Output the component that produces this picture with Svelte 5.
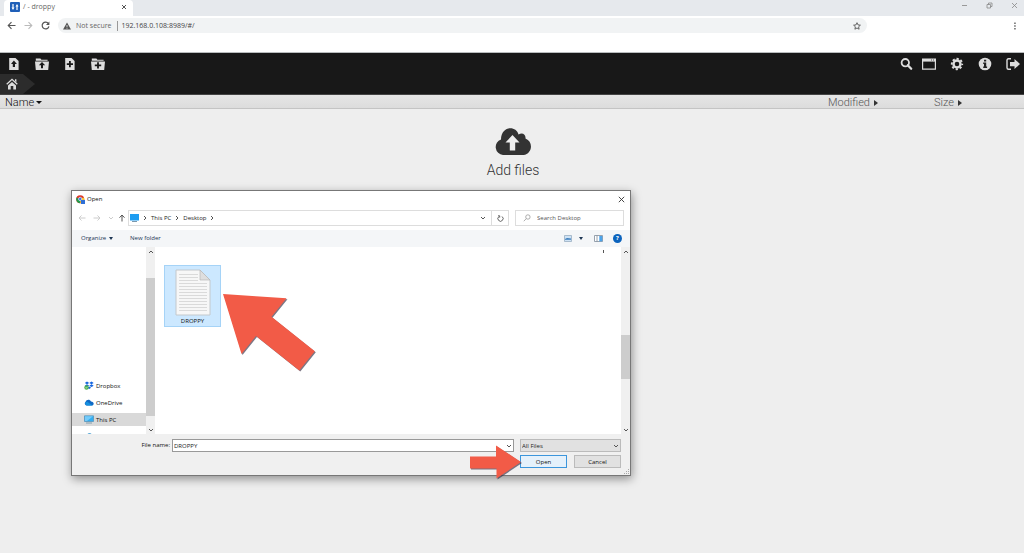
<script>
  let address = $state('192.168.0.108:8989/#/');
  let fileName = $state('DROPPY');
  const crumbs = ['This PC', 'Desktop'];
  const places = ['Dropbox', 'OneDrive', 'This PC', 'Network'];
</script>

{#snippet chevron(rotate)}
  <svg class="chev" viewBox="0 0 6 6" style:rotate="{rotate}deg" aria-hidden="true">
    <path d="M1 2l2 2 2-2" fill="none" stroke="currentColor" stroke-width="1" />
  </svg>
{/snippet}

<div class="window">
  <header class="tabs">
    <div class="tab">
      <svg width="10" height="10" viewBox="0 0 10 10" aria-hidden="true">
        <rect width="10" height="10" rx="1" fill="#1f5fb8" />
        <path d="M3 2v4M7 4v4" stroke="#fff" stroke-width="1.2" />
        <path d="M1.500 5.600h3L3 8zM5.500 4.400h3L7 2z" fill="#fff" />
      </svg>
      <span class="tab-title">/ - droppy</span>
      <button aria-label="Close tab">
        <svg width="6" height="6" viewBox="0 0 6 6"><path d="M1 1l4 4M5 1L1 5" stroke="#555" stroke-width="1" /></svg>
      </button>
    </div>
    <div class="controls">
      <button aria-label="Minimize"><svg width="7" height="7" viewBox="0 0 7 7"><path d="M1 3.500h5" stroke="#999" /></svg></button>
      <button aria-label="Restore"><svg width="7" height="7" viewBox="0 0 7 7"><path d="M1 2.500h3.500V6H1zM2.500 2.500V1H6v3.500H4.500" fill="none" stroke="#888" stroke-width=".8" /></svg></button>
      <button aria-label="Close"><svg width="7" height="7" viewBox="0 0 7 7"><path d="M1 1l5 5M6 1L1 6" stroke="#888" stroke-width=".8" /></svg></button>
    </div>
  </header>

  <div class="browser-bar">
    <button aria-label="Back"><svg width="9" height="9" viewBox="0 0 9 9"><path d="M8.500 4.500H1.300M4.500 1.200L1.200 4.500l3.300 3.300" fill="none" stroke="#555" stroke-width="1.100" /></svg></button>
    <button aria-label="Forward"><svg width="9" height="9" viewBox="0 0 9 9"><path d="M.5 4.500h7.200M4.500 1.200l3.300 3.300-3.300 3.300" fill="none" stroke="#bbb" stroke-width="1.100" /></svg></button>
    <button aria-label="Reload"><svg width="9" height="9" viewBox="0 0 9 9"><path d="M7.400 2.600A3.400 3.400 0 1 0 7.900 5.300" fill="none" stroke="#555" stroke-width="1.200" /><path d="M8.400.6v3.400H5z" fill="#555" /></svg></button>
    <div class="omnibox">
      <svg width="8" height="8" viewBox="0 0 8 8" aria-hidden="true"><path d="M4 .4L8 7.600H0z" fill="#555" /><path d="M4 3v2.200M4 5.800v.9" stroke="#f1f3f4" stroke-width=".8" /></svg>
      <span class="secure">Not secure</span>
      <input aria-label="Address" bind:value={address} />
      <button aria-label="Bookmark"><svg width="8" height="8" viewBox="0 0 8 8"><path d="M4 .7l1 2.200 2.400.3-1.800 1.600.5 2.400L4 6 1.900 7.200l.5-2.400L.6 3.200 3 2.900z" fill="none" stroke="#555" stroke-width=".9" /></svg></button>
    </div>
    <button class="menu" aria-label="Menu"><svg width="4" height="8" viewBox="0 0 4 8"><path d="M1.200.5h1.500V2H1.200zM1.200 3.300h1.500v1.500H1.200zM1.200 6.100h1.500v1.500H1.200z" fill="#666" /></svg></button>
  </div>

  <nav class="app-bar">
    <div class="tools">
      <button aria-label="Upload file"><svg viewBox="0 0 14 14"><path d="M2.200 1h6.300L11.600 4v9H2.200z" fill="#ddd" /><path d="M6.900 3.600l3 3.400H8v3H5.800V7H4z" fill="#181818" /></svg></button>
      <button aria-label="Upload folder"><svg viewBox="0 0 14 14"><path d="M.8 1.600h4.600l1 1.200h6.200v1H.8zM0 4.500h14L13.200 13H.8z" fill="#ddd" /><path d="M7 5l3.200 3.300H8v3H6v-3H3.800z" fill="#181818" /></svg></button>
      <button aria-label="New file"><svg viewBox="0 0 14 14"><path d="M2.200 1h6.300L11.600 4v9H2.200z" fill="#ddd" /><path d="M6 4h1.800v2.200H10V8H7.800v2.200H6V8H3.800V6.200H6z" fill="#181818" /></svg></button>
      <button aria-label="New folder"><svg viewBox="0 0 14 14"><path d="M.8 1.600h4.600l1 1.200h6.200v1H.8zM0 4.500h14L13.200 13H.8z" fill="#ddd" /><path d="M6.100 5.200h1.800v2.300h2.300v1.800H7.900v2.300H6.100V9.300H3.800V7.500h2.300z" fill="#181818" /></svg></button>
    </div>
    <div class="tools right">
      <button class="search" aria-label="Search"><svg viewBox="0 0 14 14"><circle cx="6.300" cy="5.700" r="3.700" fill="none" stroke="#ddd" stroke-width="1.800" /><path d="M8.800 8.300l3.400 3.500" stroke="#ddd" stroke-width="2.300" stroke-linecap="round" /></svg></button>
      <button aria-label="Split view"><svg viewBox="0 0 14 14"><path d="M.6 2.200h12.800v9.900H.6z" fill="none" stroke="#ddd" stroke-width="1.200" /><path d="M.6 2h12.800v2.600H.6z" fill="#ddd" /><path d="M9 3h1M11 3h1" stroke="#333" stroke-width=".8" /></svg></button>
      <button aria-label="Settings"><svg viewBox="0 0 14 14"><circle cx="7" cy="7" r="3.500" fill="none" stroke="#ddd" stroke-width="2.400" /><circle cx="7" cy="7" r="5.200" fill="none" stroke="#ddd" stroke-width="1.900" stroke-dasharray="2.200 1.884" stroke-dashoffset="1.100" /></svg></button>
      <button aria-label="About"><svg viewBox="0 0 14 14"><circle cx="7" cy="7" r="6.300" fill="#ddd" /><path d="M6 2.700h2.200v1.800H6zM5.200 5.600h3v4h.9V11H5.200V9.600H6V7h-.8z" fill="#222" /></svg></button>
      <button aria-label="Log out"><svg viewBox="0 0 14 14"><path d="M5 1.800H2.500Q1 1.800 1 3.300v7.400q0 1.500 1.500 1.500H5" fill="none" stroke="#ddd" stroke-width="1.400" /><path d="M4 4.900h4.500V2L14 7l-5.500 5V9.200H4z" fill="#ddd" /></svg></button>
    </div>
  </nav>
  <div class="path-bar">
    <a href="#/" aria-label="Home">
      <svg width="12" height="12" viewBox="0 0 12 12"><path d="M.7 6.300L6 1.300l5.300 5" fill="none" stroke="#ddd" stroke-width="1.300" /><path d="M9 1.300h1.400v3L9 3.300zM2 7.600l4-3.700 4 3.700V11.500H7.300V8H4.700v3.500H2z" fill="#ddd" /></svg>
    </a>
  </div>

  <div class="columns">
    <button class="name">Name <i class="down"></i></button>
    <button>Modified <i></i></button>
    <button>Size <i></i></button>
  </div>

  <main>
    <button class="add">
      <svg width="38" height="28" viewBox="0 0 38 28" aria-hidden="true"><path d="M9 27A8 8 0 0 1 7 11.500C7-2 22-3 24.500 6.500C28 4 32 6 31.500 10.500C40 14 38 26 29.500 27z" fill="#333" /><path d="M18.500 7l7 7.500h-4.300v8h-5.400v-8h-4.300z" fill="#eee" /></svg>
      Add files
    </button>
  </main>

  <div class="dialog" role="dialog" aria-label="Open">
    <div class="title">
      <svg width="9" height="9" viewBox="0 0 9 9" aria-hidden="true"><circle cx="4.200" cy="4.200" r="4" fill="#dd3a2b" /><path d="M.6 2.500A4 4 0 0 0 4 8.200L5 5z" fill="#219a4b" /><path d="M8 2.700A4 4 0 0 1 4 8.200L5 3z" fill="#fbc52c" /><circle cx="4.200" cy="4" r="1.700" fill="#3b78e7" stroke="#fff" stroke-width=".6" /><path d="M5 5h4v4H5z" fill="#2f6fd6" /></svg>
      <span>Open</span>
      <button aria-label="Close dialog"><svg width="7" height="7" viewBox="0 0 7 7"><path d="M.8.8l5.400 5.400M6.200.8L.8 6.200" stroke="#333" stroke-width=".9" /></svg></button>
    </div>

    <div class="locate">
      <div class="moves">
        <button aria-label="Back"><svg width="8" height="8" viewBox="0 0 8 8"><path d="M7.500 4H1M3.500 1.500L1 4l2.500 2.500" fill="none" stroke="#ccc" /></svg></button>
        <button aria-label="Forward"><svg width="8" height="8" viewBox="0 0 8 8"><path d="M.5 4H7M4.500 1.500L7 4 4.500 6.500" fill="none" stroke="#ccc" /></svg></button>
        <button class="faint" aria-label="Recent">{@render chevron(0)}</button>
        <button aria-label="Up"><svg width="8" height="8" viewBox="0 0 8 8"><path d="M4 7.500V1M1.500 3.700L4 1l2.500 2.700" fill="none" stroke="#555" /></svg></button>
      </div>
      <div class="crumbs">
        <svg width="9" height="8" viewBox="0 0 9 8" aria-hidden="true"><path d="M0 0h9v6.500H0z" fill="#1e9df1" /><path d="M2 7.500h5" stroke="#7a98ad" /></svg>
        {@render chevron(-90)}
        {#each crumbs as crumb}
          <button>{crumb}</button>{@render chevron(-90)}
        {/each}
        <button class="drop" aria-label="Previous locations">{@render chevron(0)}</button>
        <button class="refresh" aria-label="Refresh"><svg width="7" height="7" viewBox="0 0 7 7"><path d="M5 1.500A2.600 2.600 0 1 1 2 1.500M1 .8h1.700v1.800" fill="none" stroke="#555" stroke-width=".9" /></svg></button>
      </div>
      <div class="find">
        <svg width="8" height="8" viewBox="0 0 8 8" aria-hidden="true"><circle cx="4.900" cy="3" r="2.200" fill="none" stroke="#999" stroke-width=".8" /><path d="M3.300 4.600L.8 7.200" stroke="#999" stroke-width=".8" /></svg>
        <input aria-label="Search Desktop" placeholder="Search Desktop" />
      </div>
    </div>

    <div class="commands">
      <button>Organize <i class="down"></i></button>
      <button>New folder</button>
      <div class="views">
        <button aria-label="Change view"><svg width="9" height="7" viewBox="0 0 9 7"><path d="M.5.5h7v6h-7z" fill="#cfe3f5" stroke="#8fa6bb" stroke-width=".7" /><path d="M1 4l2-1 4 .6v1.200H1z" fill="#3a7dbd" /></svg></button>
        <button aria-label="More views"><i class="down"></i></button>
        <button class="pane" aria-label="Preview pane"><svg width="9" height="7" viewBox="0 0 9 7"><path d="M.5.5h8v6h-8zM3 .5v6" fill="#fff" stroke="#7d8b99" stroke-width=".8" /><path d="M5.300 1h3v5.300h-3z" fill="#4ba3ea" /></svg></button>
        <button class="help" aria-label="Help">?</button>
      </div>
    </div>

    <div class="browse">
      <ul class="places">
        {#each places as place, i}
          <li class:active={place === 'This PC'}>
            <svg width="10" height="9" viewBox="0 0 10 9" aria-hidden="true">
              {#if i === 0}
                <path d="M3 .5l2.200 1.400L3 3.300.8 1.900zM7.500.5l2.200 1.400-2.200 1.400-2.200-1.400zM3 3.300l2.200 1.400L3 6.100.8 4.700zM7.500 3.300l2.200 1.400-2.200 1.400-2.200-1.400zM5.200 5.400l2 1.300-2 1.300-2-1.300z" fill="#1565e0" /><circle cx="2.500" cy="6.500" r="2.200" fill="#4caf50" /><path d="M1.400 6.500l.8.8 1.300-1.500" fill="none" stroke="#fff" stroke-width=".6" />
              {:else if i === 1}
                <path d="M2.500 7.500A2 2 0 0 1 1.500 4C2.500 1 6 1 7 3.500c3 0 3.500 3.500 1.300 4z" fill="#0f68c4" /><path d="M1 5l2-1.500L8.500 7.500h-6z" fill="#1490df" />
              {:else if i === 2}
                <path d="M.5.800h9v5.700h-9z" fill="#35aef0" stroke="#4a86ae" stroke-width=".6" /><path d="M1 1.200h8L3 6H1z" fill="#74cbfa" /><path d="M2 8h6" stroke="#7c97a8" stroke-width=".9" />
              {:else}
                <path d="M3 3a2.600 2.600 0 0 1 5 0v4H3z" fill="#5ba9d6" />
              {/if}
            </svg>
            <a href="#/">{place}</a>
          </li>
        {/each}
      </ul>
      <div class="scroll left"><span>{@render chevron(180)}</span><b></b><span>{@render chevron(0)}</span></div>
      <div class="files">
        <button class="file">
          <svg width="36" height="47" viewBox="0 0 36 47" aria-hidden="true">
            <path d="M1 1h24l10 10v35H1z" fill="#f7f7f7" stroke="#c3c8cc" />
            {#each [5, 8, 11, 14, 17, 20, 23, 26, 29, 32, 35, 38, 41] as y}
              <path d={`M4 ${y}.5h${y < 12 ? 19 : 28}`} stroke="#dadada" />
            {/each}
            <path d="M25 1v10h10z" fill="#dedede" stroke="#b7b7b7" stroke-width=".7" />
          </svg>
          DROPPY
        </button>
        <i class="mark"></i>
      </div>
      <div class="scroll main-scroll"><span>{@render chevron(180)}</span><b></b><span>{@render chevron(0)}</span></div>
    </div>

    <form class="choose" onsubmit={(e) => e.preventDefault()}>
      <label for="file-name">File name:</label>
      <div class="combo">
        <input id="file-name" bind:value={fileName} />
        <button type="button" aria-label="Recent names">{@render chevron(0)}</button>
      </div>
      <div class="combo kind">
        <select aria-label="File type"><option>All Files</option></select>
        {@render chevron(0)}
      </div>
      <div class="actions">
        <button class="primary">Open</button>
        <button type="button">Cancel</button>
      </div>
    </form>
    <svg class="grip" viewBox="0 0 6 6" aria-hidden="true"><path d="M4 0h1v1H4zM2 2h1v1H2zM4 2h1v1H4zM0 4h1v1H0zM2 4h1v1H2zM4 4h1v1H4z" fill="#aaa" /></svg>

    <svg class="pointer big" viewBox="0 0 94 80" aria-hidden="true">
      <path d="M1 1l63.500 4.300-15 18.500 43.300 34.500-15.500 19.200L34 43 19.500 61z" />
    </svg>
    <svg class="pointer small" viewBox="0 0 54 37" aria-hidden="true">
      <path d="M1 12.500h26V1.500L52 18 27.500 34.500V24.500H1z" />
    </svg>
  </div>
</div>

<style>
  :global(body) { background: #eee; }
  * { box-sizing: border-box; }
  .window { position: relative; min-height: 100vh; font: 7px/10px "Open Sans", "Noto Sans", sans-serif; color: #333; overflow: hidden; }
  button, input, select { font: inherit; color: inherit; border: 0; padding: 0; margin: 0; background: none; outline: 0; border-radius: 0; min-width: 0; }
  button { display: flex; align-items: center; flex: none; }
  svg { display: block; flex: none; }
  i { border: 3px solid transparent; border-left: 4px solid #333; border-right: 0; }
  i.down { border: 3px solid transparent; border-top-color: currentColor; border-bottom: 0; }

  .tabs { display: flex; justify-content: space-between; height: 16px; padding-left: 4px; background: #e6e9ed; }
  .tab { display: flex; align-items: center; gap: 3px; width: 129px; padding: 0 6px 2px; background: #fff; border-radius: 4px 4px 0 0; color: #666; }
  .tab-title { flex: 1; }
  .controls { display: flex; gap: 18px; padding: 0 6px 5px 0; }

  .browser-bar { display: flex; align-items: flex-start; height: 36px; padding: 2px 7px 0; gap: 8px; background: #fff; }
  .browser-bar > button { height: 15px; }
  .omnibox { display: flex; align-items: center; gap: 5px; height: 15px; flex: 1; margin-right: 138px; padding: 0 6px 0 5px; border-radius: 8px; background: #f1f3f4; }
  .omnibox input { flex: 1; height: 10px; padding-left: 4px; border-left: 1px solid #999; color: #444; }
  .secure { color: #666; }

  .app-bar { display: flex; justify-content: space-between; height: 22px; padding: 1px 4px 0 7px; border-top: 1px solid #b9bcbe; background: #181818; }
  .tools { display: flex; align-items: center; gap: 14px; }
  .tools svg { width: 14px; height: 14px; }
  .tools .search { margin-right: -5px; }
  .path-bar { height: 21px; background: #181818; border-bottom: 1px solid #444; }
  .path-bar a { display: flex; align-items: center; width: 35px; height: 20px; padding-left: 6px; background: #2c2c2c; clip-path: polygon(0 0, 23px 0, 100% 50%, 23px 100%, 0 100%); }

  .columns { display: grid; grid-template-columns: 1fr 106px 90px; height: 14px; border-bottom: 1px solid #c4c4c4; background: linear-gradient(#e6e6e6, #dcdcdc); font: 300 11px/13px Roboto, sans-serif; color: #555; }
  .columns button { gap: 4px; padding-top: 1px; }
  .columns .name { padding-left: 5px; gap: 2px; color: #111; }

  main { display: flex; justify-content: center; padding: 19px 0 0 2px; }
  .add { flex-direction: column; gap: 6px; font: 300 14px/16px Roboto, sans-serif; color: #333; }

  .dialog { position: absolute; left: 71px; top: 190px; width: 560px; border: 1px solid #777; background: #fff; box-shadow: 1px 3px 9px #0006; font-size: 6px; color: #111; }
  .title { display: flex; align-items: center; gap: 2px; height: 16px; padding: 0 5px 0 4px; }
  .title span { flex: 1; }
  .locate { display: flex; height: 23px; padding: 3px 6px 4px; }
  .moves { display: flex; align-items: center; gap: 7px; width: 50px; }
  .moves button:nth-child(3) { margin-right: -3px; }
  .faint { color: #ccc; }
  .chev { width: 6px; height: 6px; color: #555; }
  .faint .chev { color: #ccc; }
  .crumbs { display: flex; align-items: center; gap: 3px; flex: 1; padding-left: 1px; border: 1px solid #ddd; color: #222; }
  .crumbs .drop { margin-left: auto; margin-right: 2px; }
  .refresh { width: 17px; height: 100%; justify-content: center; border-left: 1px solid #ddd; }
  .find { display: flex; align-items: center; gap: 6px; width: 109px; margin-left: 6px; padding-left: 7px; border: 1px solid #ddd; }
  .find input { width: 80px; height: 10px; }
  .find input::placeholder { color: #555; opacity: 1; }
  .commands { display: flex; align-items: center; gap: 17px; height: 17px; padding: 0 8px 1px 9px; background: #f4f6f8; color: #1c3553; }
  .commands button { gap: 3px; }
  .commands i.down { border-width: 3px 2px 0; }
  .views { display: flex; align-items: center; gap: 6px; margin-left: auto; }
  .views .pane { margin: 0 4px 0 5px; }
  .views .help { width: 9px; height: 9px; justify-content: center; border-radius: 50%; background: #0b63bd; color: #fff; font-weight: 700; }

  .browse { display: flex; height: 187px; }
  .places { display: flex; flex-direction: column; gap: 4px; width: 74px; margin: 0; padding: 132px 0 0; list-style: none; overflow: hidden; }
  .places li { display: flex; flex: none; align-items: center; gap: 2px; height: 13px; padding-left: 12px; }
  .places .active { background: #d9d9d9; }
  .places a { color: inherit; text-decoration: none; }
  .scroll { display: flex; flex-direction: column; width: 9px; background: #f0f0f0; }
  .scroll span { display: flex; align-items: center; justify-content: center; height: 9px; }
  .scroll b { background: #cdcdcd; }
  .left b { margin: 22px 0 auto; height: 138px; }
  .main-scroll b { margin: 79px 0 auto; height: 44px; }
  .files { display: flex; justify-content: space-between; align-items: flex-start; flex: 1; padding: 0 17px 0 9px; }
  .file { flex-direction: column; width: 57px; height: 62px; margin-top: 18px; padding-top: 3px; border: 1px solid #a5d3f7; background: #cce8ff; }
  .mark { width: 1px; height: 3px; margin-top: 3px; border: 0; background: #555; }

  .choose { display: grid; grid-template-columns: 98px 342px 1fr; gap: 3px 2px; height: 41px; padding: 5px 9px 0 0; background: #f0f0f0; align-content: start; }
  .choose label { text-align: right; line-height: 13px; }
  .combo { display: flex; align-items: center; height: 13px; padding: 0 1px; border: 1px solid #999; background: #fff; color: #222; }
  .combo input, .combo select { flex: 1; height: 11px; appearance: none; }
  .kind { margin-left: 4px; border-color: #bbb; background: #e1e1e1; }
  .actions { grid-column: 3; display: flex; gap: 7px; margin-left: 4px; }
  .actions button { flex: 1; height: 13px; justify-content: center; border: 1px solid #bbb; background: #e1e1e1; }
  .actions .primary { border-color: #3c96dc; background: #e5f1fb; }
  .grip { position: absolute; right: 0; bottom: 0; width: 6px; height: 6px; }

  .pointer { position: absolute; fill: #f25b47; filter: drop-shadow(1px 1px 0 #3b3348aa); }
  .big { left: 150px; top: 102px; width: 94px; height: 80px; }
  .small { left: 397px; top: 253px; width: 54px; height: 37px; }
</style>
